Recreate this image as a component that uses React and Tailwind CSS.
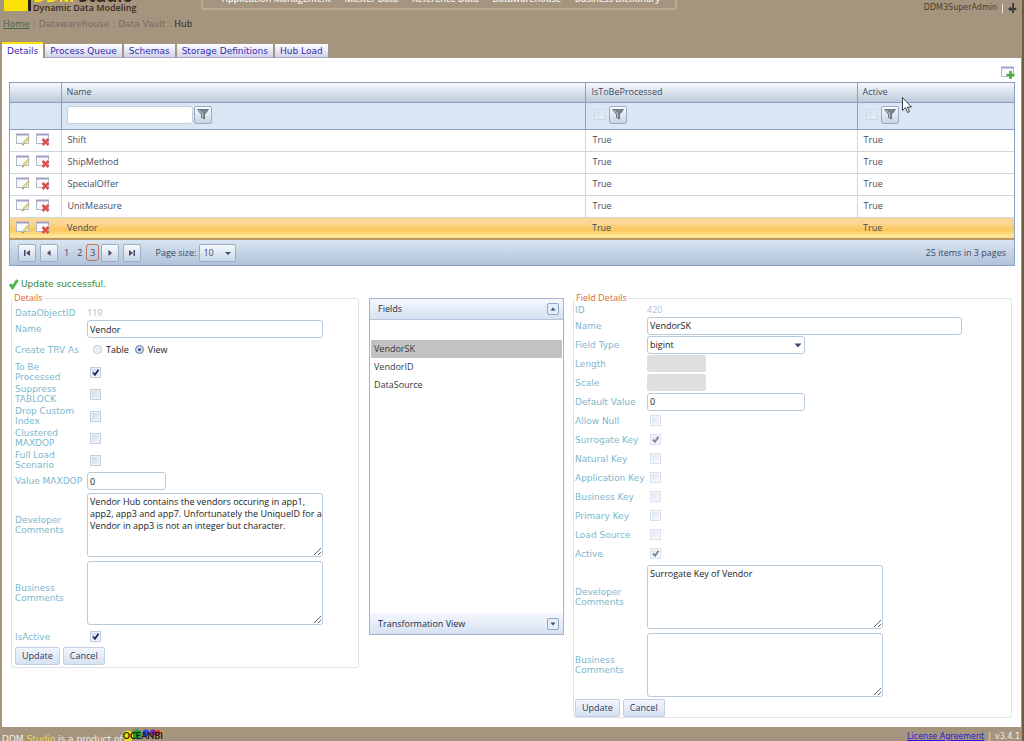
import React, { useState } from 'react';

const navItems = ['Application Management', 'Master Data', 'Reference Data', 'Datawarehouse', 'Business Dictionary'];
const tabs = ['Details', 'Process Queue', 'Schemas', 'Storage Definitions', 'Hub Load'];
const rows = ['Shift', 'ShipMethod', 'SpecialOffer', 'UnitMeasure', 'Vendor'];

const inputClass = 'h-[18px] rounded-[3px] border border-[#b9cbdb] bg-white px-[2px] text-[9px] leading-[12px] text-[#222] outline-none';
const labelClass = 'text-[9px] leading-[10px] text-[#7db8cd] font-["DejaVu_Sans",sans-serif]';
const gridButton = 'flex h-[18px] w-[18px] items-center justify-center rounded-[2px] border border-[#9aacc6] bg-linear-to-b from-[#fbfcfe] to-[#c5d3e4]';

const WindowIcon = ({ type }) => (
  <svg width="14" height="14" viewBox="0 0 14 14" className="shrink-0">
    <rect x="0.5" y="1.5" width="12" height="9" fill="#f8fafc" stroke="#b5b9c6" />
    <path d="M0 1.5h13" stroke="#a59fc6" strokeWidth="2" />
    {type === 'edit' && (
      <>
        <path d="M6.5 12l1-3 4.5-5 1.5 1-4.5 5z" fill="#f3e27b" stroke="#b8a765" strokeWidth="0.7" />
        <path d="M6.3 12.5l.5-1.5 1 .8z" fill="#555" />
      </>
    )}
    {type === 'delete' && <path d="M6.5 6l6 6m0-6l-6 6" stroke="#dc4f4e" strokeWidth="2.6" />}
    {type === 'add' && <path d="M9.5 5v8m-4-4h8" stroke="#45ae45" strokeWidth="2.6" />}
  </svg>
);

const Funnel = () => (
  <svg width="12" height="11" viewBox="0 0 12 11">
    <path d="M0.5 0.5h11L7.5 5.5V10l-3-1.5v-3z" fill="#7b8790" stroke="#56636f" strokeWidth="0.8" />
    <path d="M2 1l3.5 4v3.5" stroke="#c6ced5" fill="none" />
  </svg>
);

const Arrow = ({ d, className = '' }) => (
  <svg width="8" height="8" viewBox="0 0 8 8" className={className}>
    <path d={d} fill="#3d4b66" />
  </svg>
);

const Check = ({ id, defaultChecked = false, disabled = false, label }) => (
  <span className={`relative flex h-[11px] w-[11px] shrink-0 ${disabled ? 'opacity-60' : ''}`}>
    <input
      id={id}
      type="checkbox"
      aria-label={label}
      defaultChecked={defaultChecked}
      disabled={disabled}
      className="peer h-[11px] w-[11px] appearance-none border border-[#c2cedd] bg-linear-to-br from-[#c9d5e4] to-[#f4f7fb] shadow-[inset_0_0_0_1px_#eef3f9]"
    />
    <svg viewBox="0 0 11 11" className="pointer-events-none absolute inset-0 hidden h-[11px] w-[11px] peer-checked:block">
      <path d="M3 5.5l2 2.3 3.5-5" fill="none" stroke="#22335f" strokeWidth="1.9" />
    </svg>
  </span>
);

const FormRow = ({ id, label, className = 'h-[19px]', children }) => (
  <div className={`grid grid-cols-[72px_1fr] items-center ${className}`}>
    <label htmlFor={id} className={`${labelClass} pr-1`}>{label}</label>
    <div className="flex items-center">{children}</div>
  </div>
);

const CheckRow = ({ id, label, className, defaultChecked, disabled }) => (
  <FormRow id={id} label={label} className={className}>
    <div className="pl-[3px]">
      <Check id={id} defaultChecked={defaultChecked} disabled={disabled} />
    </div>
  </FormRow>
);

const Buttons = () => (
  <div className="flex gap-[3px]">
    {['Update', 'Cancel'].map((name) => (
      <button key={name} type="button" className="h-[18px] rounded-[2px] border border-[#c3cfe2] bg-linear-to-b from-[#f2f6fc] to-[#d6e1f2] px-[6px] text-[9px] leading-[12px] text-[#333c5c]">
        {name}
      </button>
    ))}
  </div>
);

const Header = () => (
  <header>
    <div className="flex h-[13px] items-end overflow-hidden">
      <div className="flex w-[200px] shrink-0 items-end pl-[3px]">
        <div className="mb-[2px] h-[11px] w-[27px] border-r-[3px] border-[#2b2118] bg-[#fbe108]" />
        <div className="pl-[2px] font-['Open_Sans',sans-serif] whitespace-nowrap text-[#3a2c20]">
          <div className="text-[17px] leading-[14px] font-bold"><span className="text-[#fbe108]">DDM</span> Studio</div>
          <div className="text-[9px] leading-[10px] font-semibold">Dynamic Data Modeling</div>
        </div>
      </div>
      <nav className="mb-[3px] flex h-[20px] w-[476px] shrink-0 items-center justify-between rounded-b-[2px] border-2 border-t-0 border-[#b9aa96] pr-[15px] pl-[19px] text-[9px] leading-[12px] font-semibold whitespace-nowrap text-[#f6f1e9]">
        {navItems.map((item) => <a key={item} href="#">{item}</a>)}
      </nav>
      <div className="flex flex-1 items-center justify-end gap-[5px] pr-[5px] font-['DejaVu_Sans',sans-serif] text-[8px] leading-[10px] text-[#4c3d31]">
        <span>DDM3SuperAdmin</span>
        <span className="h-[9px] w-px bg-[#eee2d4]" />
        <svg width="9" height="10" viewBox="0 0 9 10">
          <path d="M5 0v10M1 6h7" stroke="#3a3a3f" strokeWidth="1.8" />
          <path d="M0 6l3-2.5v5zM9 6L6.5 4.5v3z" fill="#3a3a3f" />
        </svg>
      </div>
    </div>
    <div className="mt-[5px] flex h-[12px] items-center gap-[3px] pl-[2px] font-['DejaVu_Sans',sans-serif] text-[9px] leading-[12px] text-[#776b5f]">
      <a href="#" className="text-[#456b54] underline">Home</a>
      <span>:</span>
      <span>Datawarehouse</span>
      <span>:</span>
      <span>Data Vault</span>
      <span>:</span>
      <span className="text-[#3e2d29]">Hub</span>
    </div>
  </header>
);

const Tabs = () => {
  const [active, setActive] = useState('Details');
  return (
    <div className="mt-[12px] flex h-[16px] items-end gap-[2px] font-['DejaVu_Sans',sans-serif] text-[9px] leading-[12px] text-[#3a2ab0]">
      {tabs.map((tab) => (
        <button
          key={tab}
          type="button"
          onClick={() => setActive(tab)}
          className={tab === active
            ? 'h-[16px] border-t-2 border-[#fbe108] bg-white px-[5px]'
            : 'h-[14px] border-b border-[#a9acc4] bg-linear-to-b from-white to-[#cfd3ea] px-[5px]'}
        >
          {tab}
        </button>
      ))}
    </div>
  );
};

const BoolFilter = ({ name }) => (
  <div className="flex items-center gap-[4px] pl-[2px]">
    <Check label={`${name} filter value`} disabled />
    <button type="button" aria-label={`Filter ${name}`} className={gridButton}><Funnel /></button>
  </div>
);

const HubGrid = () => (
  <div className="border border-[#8ba0bc]">
    <table className="w-full table-fixed border-collapse text-left text-[9px] leading-[12px] text-[#444d62]">
      <colgroup>
        <col className="w-[51px]" />
        <col />
        <col className="w-[27%]" />
        <col className="w-[157px]" />
      </colgroup>
      <thead>
        <tr className="h-[19px] bg-linear-to-b from-[#f7f9fc] to-[#bccadd]">
          <th />
          {['Name', 'IsToBeProcessed', 'Active'].map((name) => (
            <th key={name} className="border-l border-[#8ba0bc] px-[5px] font-normal">{name}</th>
          ))}
        </tr>
        <tr className="h-[27px] border-y border-[#8ba0bc] bg-[#d9e7f5]">
          <td />
          <td className="border-l border-[#8ba0bc] px-[5px] pb-[2px]">
            <div className="flex items-center gap-[1px]">
              <input aria-label="Name filter" className="h-[18px] w-[126px] rounded-[3px] border border-[#c3d2e2] bg-white px-1 outline-none" />
              <button type="button" aria-label="Filter Name" className={gridButton}><Funnel /></button>
            </div>
          </td>
          <td className="border-l border-[#8ba0bc] px-[6px] pb-[2px]"><BoolFilter name="IsToBeProcessed" /></td>
          <td className="border-l border-[#8ba0bc] px-[6px] pb-[2px]"><BoolFilter name="Active" /></td>
        </tr>
      </thead>
      <tbody>
        {rows.map((name) => {
          const selected = name === 'Vendor';
          const cell = selected ? 'pl-[6px]' : 'border-l border-[#cdd7e2] pl-[6px]';
          return (
            <tr
              key={name}
              className={selected
                ? 'h-[22px] border-b-2 border-[#b99b63] bg-linear-to-b from-[#fbd795] from-30% via-[#fbc657] via-65% to-[#ffeb9f]'
                : 'h-[22px] border-b border-[#cdd7e2]'}
            >
              <td className="pl-[6px]">
                <div className="flex gap-[6px]">
                  <button type="button" aria-label={`Edit ${name}`}><WindowIcon type="edit" /></button>
                  <button type="button" aria-label={`Delete ${name}`}><WindowIcon type="delete" /></button>
                </div>
              </td>
              <td className={cell}>{name}</td>
              <td className={cell}>True</td>
              <td className={cell}>True</td>
            </tr>
          );
        })}
      </tbody>
    </table>
    {/* Pager */}
    <div className="flex h-[25px] items-center bg-linear-to-b from-[#d9e5f2] to-[#b0c2da] px-[8px] text-[9px] leading-[12px] text-[#3e4a62]">
      <div className="flex items-center gap-[4px]">
        <button type="button" aria-label="First page" className={gridButton}><Arrow d="M1 1h1.5v6H1zM7 1v6L3 4z" /></button>
        <button type="button" aria-label="Previous page" className={gridButton}><Arrow d="M5.5 1v6L2 4z" /></button>
      </div>
      <div className="flex items-center px-[2px]">
        <a href="#" className="px-[4px]">1</a>
        <a href="#" className="px-[4px]">2</a>
        <a href="#" className="flex h-[17px] items-center rounded-[3px] border border-[#bf7559] px-[3px]">3</a>
      </div>
      <div className="flex items-center gap-[4px]">
        <button type="button" aria-label="Next page" className={gridButton}><Arrow d="M2.5 1v6L6 4z" /></button>
        <button type="button" aria-label="Last page" className={gridButton}><Arrow d="M1 1v6l4-3zM5.5 1H7v6H5.5z" /></button>
      </div>
      <label htmlFor="page-size" className="pl-[14px] pr-[3px]">Page size:</label>
      <div className="relative flex">
        <select id="page-size" defaultValue="10" className="h-[18px] w-[37px] appearance-none rounded-[2px] border border-[#9aacc6] bg-linear-to-b from-[#f4f8fc] to-[#c9d8ea] pl-[3px] outline-none">
          <option>10</option>
          <option>20</option>
          <option>50</option>
        </select>
        <Arrow d="M1 3h6L4 6z" className="pointer-events-none absolute top-[5px] right-[4px]" />
      </div>
      <span className="ml-auto">25 items in 3 pages</span>
    </div>
  </div>
);

const detailChecks = [
  { id: 'to-be-processed', label: 'To Be Processed', on: true },
  { id: 'suppress-tablock', label: 'Suppress TABLOCK' },
  { id: 'drop-index', label: 'Drop Custom Index' },
  { id: 'clustered', label: 'Clustered MAXDOP' },
  { id: 'full-load', label: 'Full Load Scenario' },
];

const radioClass = 'h-[9px] w-[9px] appearance-none rounded-full border border-[#b3c3d5] bg-[#e8eef5] shadow-[inset_0_0_0_1px_#fff] checked:border-[#7e97b8] checked:bg-[#3c557c] checked:shadow-[inset_0_0_0_2px_#d5e2f0]';
const areaClass = 'h-[64px] w-[236px] rounded-[3px] border border-[#b9cbdb] bg-white py-[2px] pl-[2px] text-[9px] leading-[12px] text-[#222] outline-none';
const legendClass = 'px-[2px] text-[9px] leading-[12px] text-[#d9693c]';

const DetailsForm = () => (
  <fieldset className="w-[348px] rounded-[3px] border border-[#dfe3e6] px-[3px] pb-[2px]">
    <legend className={`-ml-[3px] ${legendClass}`}>Details</legend>
    <div className="pt-[2px]">
      <FormRow id="object-id" label="DataObjectID" className="h-[14px]">
        <output id="object-id" className="text-[9px] leading-[12px] text-[#aabdd0]">119</output>
      </FormRow>
      <FormRow id="name" label="Name" className="h-[18px]">
        <input id="name" defaultValue="Vendor" className={`w-[236px] ${inputClass}`} />
      </FormRow>
      <div role="radiogroup" aria-label="Create TRV As" className="grid h-[23px] grid-cols-[72px_1fr] items-center">
        <span className={`${labelClass} whitespace-nowrap`}>Create TRV As</span>
        <div className="flex items-center gap-[6px] pl-[6px] text-[9px] leading-[12px] text-[#222]">
          <label className="flex items-center gap-[4px]"><input type="radio" name="trv" className={radioClass} />Table</label>
          <label className="flex items-center gap-[4px]"><input type="radio" name="trv" defaultChecked className={radioClass} />View</label>
        </div>
      </div>
      {detailChecks.map((c) => (
        <CheckRow key={c.id} id={c.id} label={c.label} defaultChecked={c.on} className="h-[22px]" />
      ))}
      <FormRow id="maxdop" label="Value MAXDOP" className="h-[20px] whitespace-nowrap">
        <input id="maxdop" defaultValue="0" className={`w-[79px] ${inputClass}`} />
      </FormRow>
      <FormRow id="dev-comments" label="Developer Comments" className="h-[68px]">
        <textarea id="dev-comments" className={areaClass} defaultValue="Vendor Hub contains the vendors occuring in app1, app2, app3 and app7. Unfortunately the UniqueID for a Vendor in app3 is not an integer but character." />
      </FormRow>
      <FormRow id="biz-comments" label="Business Comments" className="h-[68px]">
        <textarea id="biz-comments" className={areaClass} />
      </FormRow>
      <CheckRow id="is-active" label="IsActive" defaultChecked className="mb-[1px] h-[19px]" />
      <Buttons />
    </div>
  </fieldset>
);

const panelHeader = 'flex h-[21px] w-full shrink-0 items-center justify-between bg-linear-to-b from-[#f5f8fd] to-[#d5e1f2] pr-[4px] pl-[8px] text-[9px] leading-[12px] text-[#222b45]';
const panelArrow = 'flex h-[12px] w-[12px] items-center justify-center rounded-[2px] border border-[#8fa6c4] bg-[#e6eef9]';

const FieldsPanel = () => {
  const [selected, setSelected] = useState('VendorSK');
  return (
    <section className="mt-[6px] flex h-[337px] flex-col border border-[#a3b4ca]">
      <button type="button" className={`border-b border-[#b4c5dc] ${panelHeader}`}>
        Fields
        <span className={panelArrow}><Arrow d="M1.5 5.5h5L4 2.5z" /></span>
      </button>
      <ul className="flex-1 px-px pt-[20px] text-[9px] leading-[12px] text-[#3a3a3a]">
        {['VendorSK', 'VendorID', 'DataSource'].map((f) => (
          <li key={f}>
            <button
              type="button"
              onClick={() => setSelected(f)}
              className={`flex h-[18px] w-full items-center px-[3px] ${f === selected ? 'bg-[#c2c2c2]' : ''}`}
            >
              {f}
            </button>
          </li>
        ))}
      </ul>
      <button type="button" className={panelHeader}>
        Transformation View
        <span className={panelArrow}><Arrow d="M1.5 2.5h5L4 5.5z" /></span>
      </button>
    </section>
  );
};

const fieldChecks = ['Allow Null', 'Surrogate Key', 'Natural Key', 'Application Key', 'Business Key', 'Primary Key', 'Load Source', 'Active'];

const FieldForm = () => (
  <fieldset className="min-w-0 rounded-[3px] border border-[#dfe3e6] px-px">
    <legend className={`-ml-px ${legendClass}`}>Field Details</legend>
    <FormRow id="field-id" label="ID" className="h-[12px]">
      <output id="field-id" className="text-[9px] leading-[12px] text-[#b4bddb]">420</output>
    </FormRow>
    <FormRow id="field-name" label="Name">
      <input id="field-name" defaultValue="VendorSK" className={`w-[315px] ${inputClass}`} />
    </FormRow>
    <FormRow id="field-type" label="Field Type">
      <div className="relative flex">
        <select id="field-type" defaultValue="bigint" className={`w-[158px] appearance-none ${inputClass}`}>
          <option>bigint</option>
          <option>int</option>
          <option>nvarchar</option>
        </select>
        <Arrow d="M0.5 2.5h7L4 6.5z" className="pointer-events-none absolute top-[5px] right-[3px]" />
      </div>
    </FormRow>
    {['Length', 'Scale'].map((name) => (
      <FormRow key={name} id={name} label={name}>
        <input id={name} disabled className="h-[17px] w-[59px] rounded-[2px] bg-[#dfdfdf]" />
      </FormRow>
    ))}
    <FormRow id="default-value" label="Default Value">
      <input id="default-value" defaultValue="0" className={`w-[158px] ${inputClass}`} />
    </FormRow>
    {fieldChecks.map((name) => (
      <CheckRow
        key={name}
        id={name}
        label={name}
        disabled
        defaultChecked={name === 'Surrogate Key' || name === 'Active'}
        className="h-[19px] whitespace-nowrap"
      />
    ))}
    <FormRow id="field-dev" label="Developer Comments" className="h-[68px]">
      <textarea id="field-dev" className={areaClass} defaultValue="Surrogate Key of Vendor" />
    </FormRow>
    <FormRow id="field-biz" label="Business Comments" className="h-[68px]">
      <textarea id="field-biz" className={areaClass} />
    </FormRow>
    <Buttons />
  </fieldset>
);

const Footer = () => (
  <footer className="flex h-[14px] items-start justify-between overflow-hidden px-px font-['DejaVu_Sans',sans-serif] text-[8px] leading-[10px] text-[#f3ede4]">
    <div className="flex items-start">
      <span className="pt-[7px] text-[9px] whitespace-nowrap">DDM <span className="text-[#f0d84a]">Studio</span> is a product of</span>
      <div className="relative pt-[4px]">
        <svg width="42" height="13" viewBox="0 0 42 13" className="absolute top-[2px] left-0">
          <circle cx="5" cy="7" r="5.5" fill="#f1e20a" />
          <circle cx="14" cy="5" r="4.5" fill="#18a12e" />
          <circle cx="23" cy="4" r="3.5" fill="#2746e0" />
          <circle cx="30" cy="3.5" r="3" fill="#7a22a0" />
          <circle cx="35" cy="3.5" r="2.5" fill="#d62a35" />
          <circle cx="40" cy="3" r="1.5" fill="#f09a2a" />
        </svg>
        <span className="relative font-['Lato',sans-serif] text-[9px] leading-[10px] font-bold text-[#1d1712]">OCEANBI</span>
      </div>
    </div>
    <div className="flex gap-[4px] pt-[5px] pr-px">
      <a href="#" className="text-[#2a16d8] underline">License Agreement</a>
      <span>|</span>
      <span>v3.4.1</span>
    </div>
  </footer>
);

export default function App() {
  return (
    <div className="relative min-h-screen border-r-2 border-[#6c5c42] bg-[#a5957f] pl-px font-['Open_Sans','Noto_Sans',sans-serif]">
      <Header />
      <div className="px-px">
        <Tabs />
        <main className="bg-white pr-[6px] pb-[9px] pl-[7px]">
          <div className="flex h-[24px] items-end justify-end pb-[2px]">
            <button type="button" aria-label="Add hub"><WindowIcon type="add" /></button>
          </div>
          <HubGrid />
          <div className="mt-[12px] mb-[2px] flex items-center gap-[2px] text-[#2d8a35]">
            <svg width="10" height="11" viewBox="0 0 10 11">
              <path d="M1 5l2.500 3.500L8.500 1" fill="none" stroke="#4cb84c" strokeWidth="3" />
            </svg>
            <p className="font-['DejaVu_Sans',sans-serif] text-[9px] leading-[12px]">Update successful.</p>
          </div>
          <div className="grid grid-cols-[349px_195px_1fr] items-start gap-x-[9px] pr-[3px] pl-[2px]">
            <DetailsForm />
            <FieldsPanel />
            <FieldForm />
          </div>
        </main>
      </div>
      <Footer />
      {/* Mouse pointer over the Active column */}
      <svg width="11" height="17" viewBox="0 0 11 17" className="pointer-events-none absolute top-[97px] left-[902px]">
        <path d="M0.5 0.5v13l3-3 2 5 2-1-2-4.500h4z" fill="#fff" stroke="#3a3f4c" />
      </svg>
    </div>
  );
}
